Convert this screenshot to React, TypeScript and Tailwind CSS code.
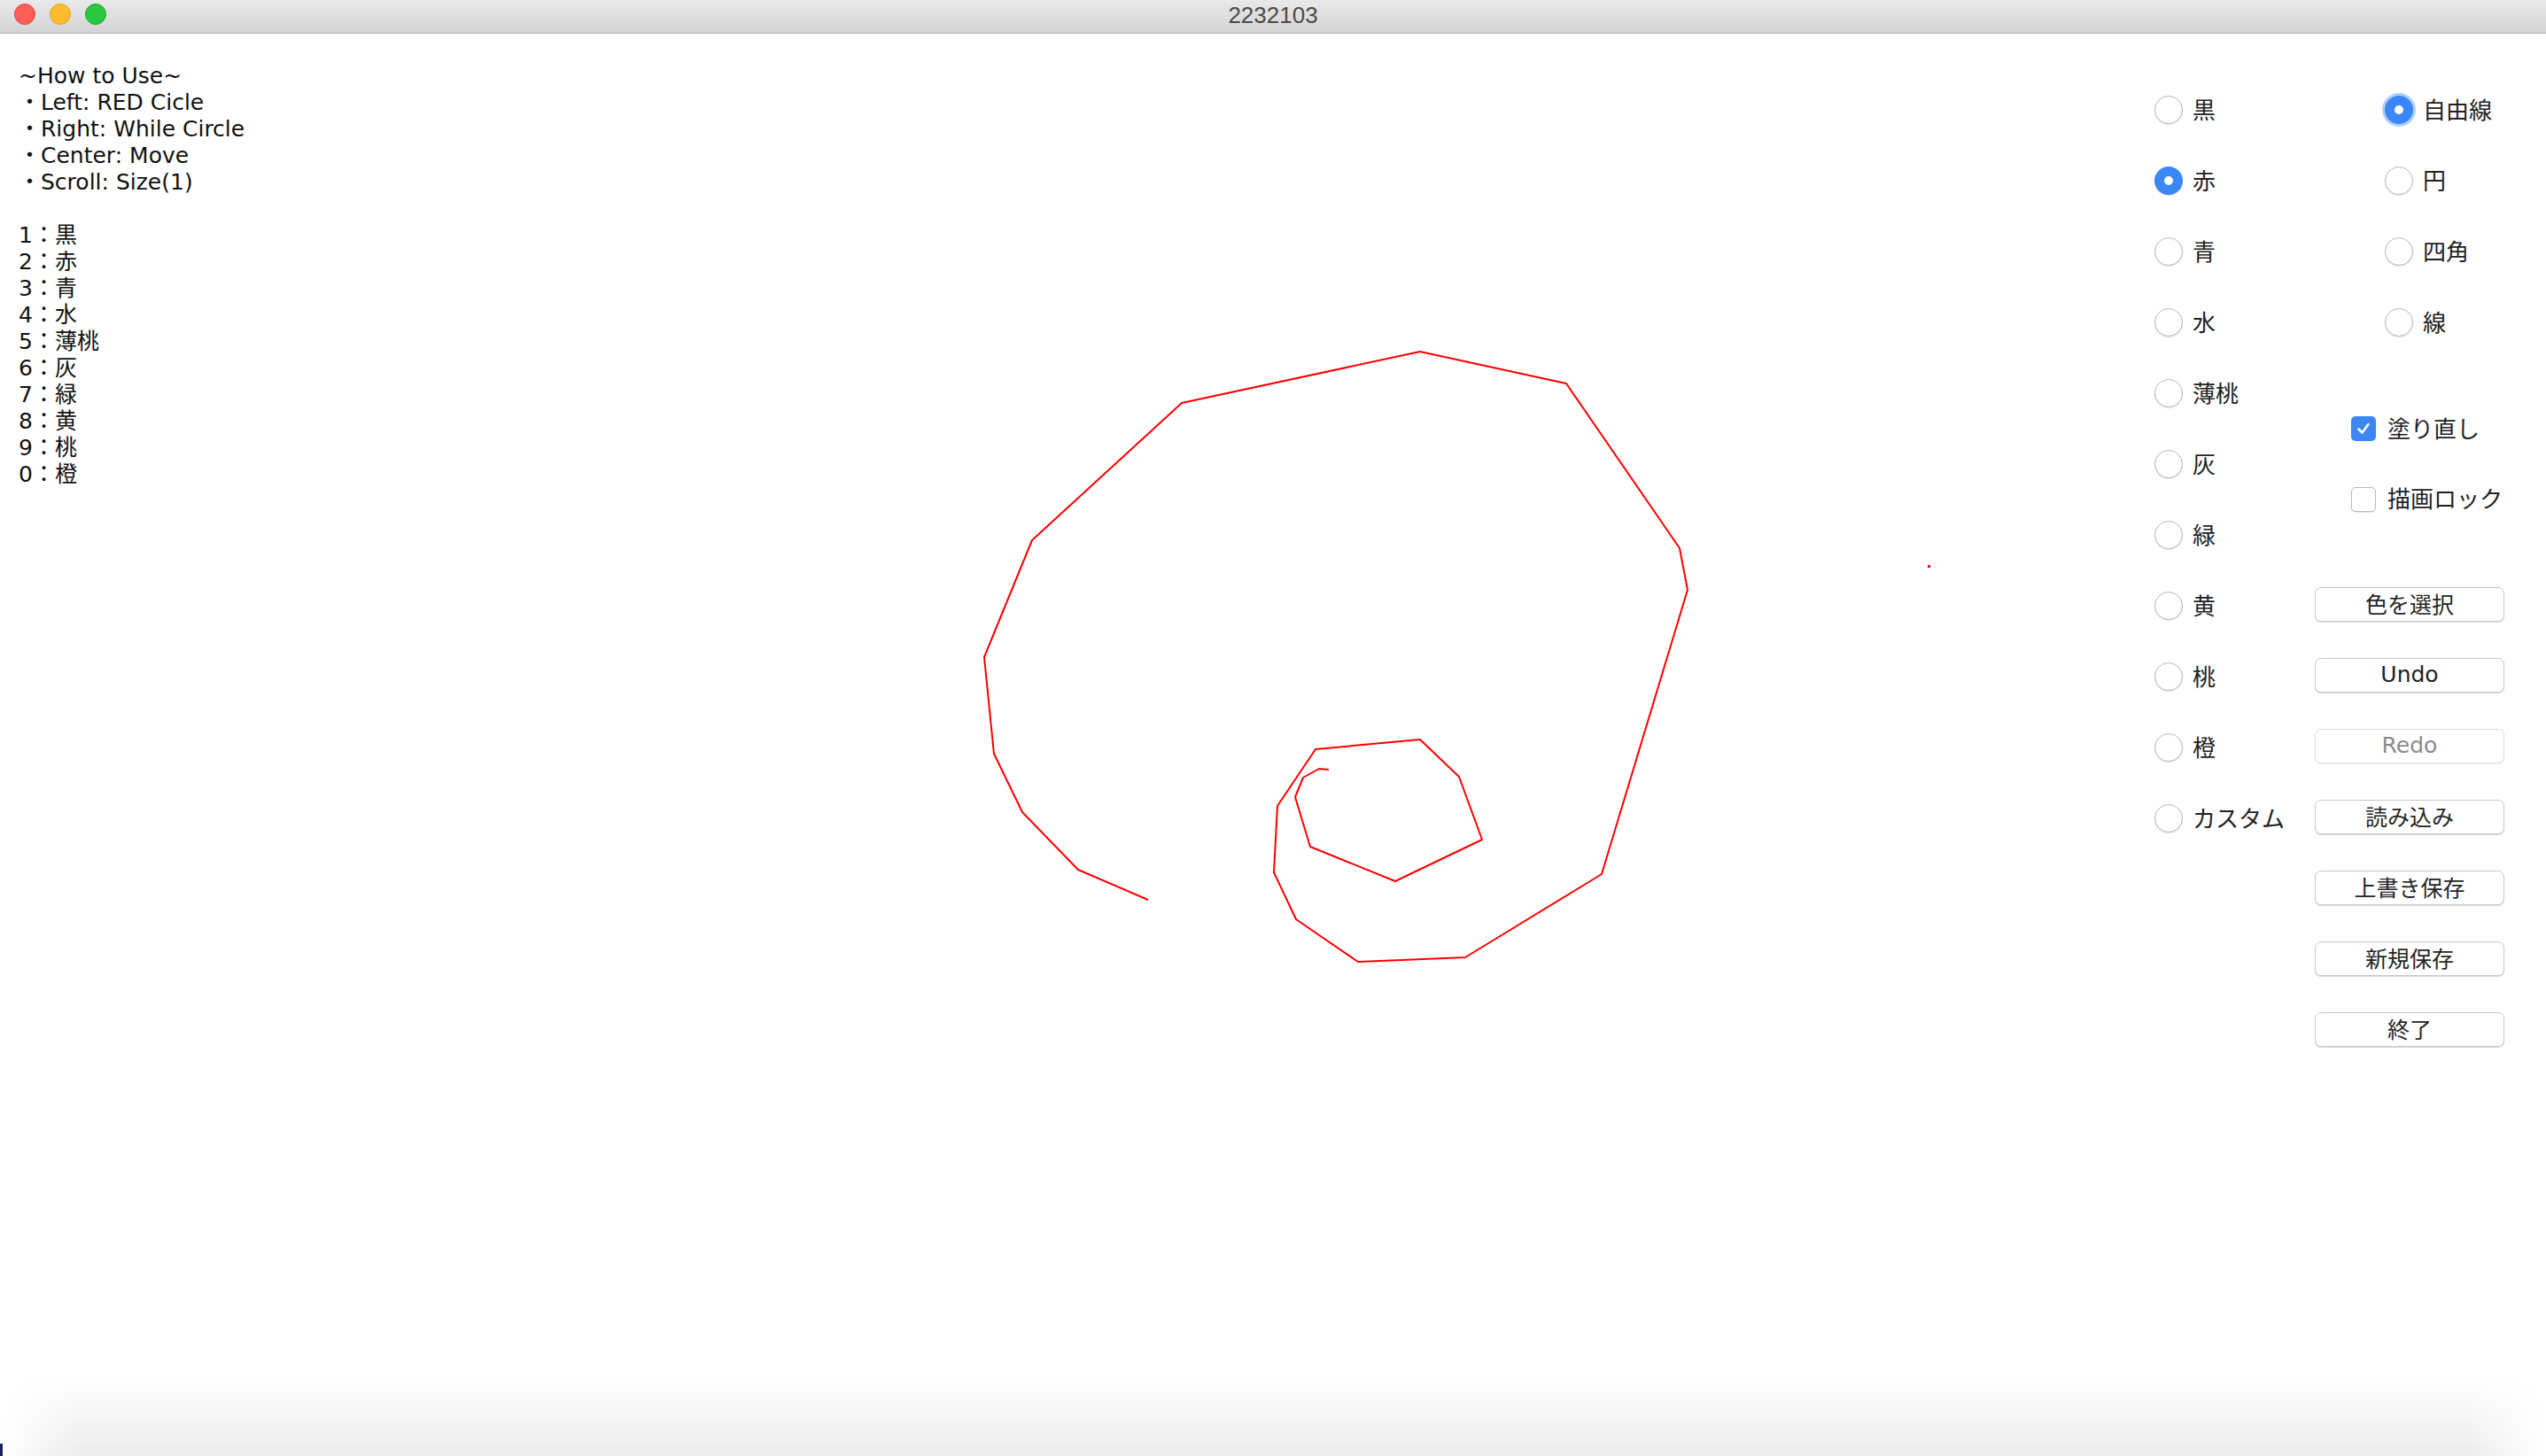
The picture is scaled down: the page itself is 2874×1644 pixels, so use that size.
import React from "react";

const colors = ["黒", "赤", "青", "水", "薄桃", "灰", "緑", "黄", "桃", "橙", "カスタム"];
const shapes = ["自由線", "円", "四角", "線"];
const buttons = ["色を選択", "Undo", "Redo", "読み込み", "上書き保存", "新規保存", "終了"];
const keys = ["1：黒", "2：赤", "3：青", "4：水", "5：薄桃", "6：灰", "7：緑", "8：黄", "9：桃", "0：橙"];

// the stroke on the canvas, in page pixels
const stroke = [
  [1296, 1016], [1217, 982], [1154, 917], [1122, 851], [1111, 742], [1165, 610],
  [1334, 455], [1603, 397], [1768, 433], [1896, 619], [1905, 666], [1808, 987],
  [1654, 1081], [1533, 1086], [1463, 1038], [1438, 985], [1442, 910], [1485, 846],
  [1603, 835], [1647, 877], [1673, 948], [1575, 995], [1479, 956], [1462, 900],
  [1471, 878], [1489, 868], [1500, 869],
];

function Radio({ checked, focused }: { checked?: boolean; focused?: boolean }) {
  if (checked) {
    return (
      <div
        className={
          "flex h-[32px] w-[32px] shrink-0 items-center justify-center rounded-full bg-[#3b87f6] " +
          (focused ? "shadow-[0_0_0_3px_rgba(110,165,250,0.55)]" : "shadow-[0_1px_1px_rgba(0,0,0,0.15)]")
        }
      >
        <div className="h-[10px] w-[10px] rounded-full bg-white" />
      </div>
    );
  }
  return <div className="h-[32px] w-[32px] shrink-0 rounded-full border border-[#b9b9b9] bg-white shadow-[0_1px_1px_rgba(0,0,0,0.12)]" />;
}

function Check({ checked }: { checked?: boolean }) {
  if (checked) {
    return (
      <div className="flex h-[28px] w-[28px] shrink-0 items-center justify-center rounded-[5px] bg-[#3b87f6]">
        <svg width="18" height="18" viewBox="0 0 18 18">
          <path d="M3.5 9.5 L7.5 13.5 L14.5 4" fill="none" stroke="white" strokeWidth="2.6" strokeLinecap="round" strokeLinejoin="round" />
        </svg>
      </div>
    );
  }
  return <div className="h-[28px] w-[28px] shrink-0 rounded-[5px] border border-[#b9b9b9] bg-white shadow-[0_1px_1px_rgba(0,0,0,0.1)]" />;
}

export default function App() {
  return (
    <div className="relative flex h-[1644px] w-[2874px] flex-col overflow-hidden bg-white">
      <div className="relative flex h-[38px] shrink-0 items-center justify-center border-b border-[#b3b3b3] bg-linear-to-b from-[#e9e9e9] to-[#d4d4d4]">
        <div className="absolute left-[16px] top-[4px] flex gap-[16px]">
          <div className="h-[24px] w-[24px] rounded-full border border-[#e1443d] bg-[#fe5f57]" />
          <div className="h-[24px] w-[24px] rounded-full border border-[#dea224] bg-[#febc2e]" />
          <div className="h-[24px] w-[24px] rounded-full border border-[#1aab2a] bg-[#28c840]" />
        </div>
        <span className="pb-[3px] font-['Liberation_Sans',sans-serif] text-[26px] leading-none text-[#4b4b4b]">2232103</span>
      </div>

      <div className="flex flex-1 justify-between">
        <div className="pl-[21px] pt-[33px] font-['DejaVu_Sans','Noto_Sans_CJK_JP',sans-serif] text-[25px] leading-[30px] text-[#111]">
          <div>~How to Use~</div>
          <div>・Left: RED Cicle</div>
          <div>・Right: While Circle</div>
          <div>・Center: Move</div>
          <div>・Scroll: Size(1)</div>
          <div className="h-[30px]" />
          {keys.map((k) => (
            <div key={k}>{k}</div>
          ))}
        </div>

        <div className="flex pr-[47px] pt-[46px] font-['Noto_Sans_CJK_JP',sans-serif] text-[26px] text-[#222]">
          <div className="flex w-[181px] flex-col">
            {colors.map((c) => (
              <div key={c} className="flex h-[80px] items-center gap-[11px]">
                <Radio checked={c === "赤"} />
                <span className="-mt-[3px] leading-none">{c}</span>
              </div>
            ))}
          </div>

          <div className="flex w-[214px] flex-col">
            {shapes.map((s) => (
              <div key={s} className="flex h-[80px] items-center gap-[11px] pl-[79px]">
                <Radio checked={s === "自由線"} focused={s === "自由線"} />
                <span className="-mt-[3px] leading-none">{s}</span>
              </div>
            ))}
            <div className="h-[40px]" />
            <div className="flex h-[80px] items-center gap-[13px] pl-[41px]">
              <Check checked />
              <span className="-mt-[3px] leading-none">塗り直し</span>
            </div>
            <div className="flex h-[79px] items-center gap-[13px] pl-[41px]">
              <Check />
              <span className="-mt-[3px] leading-none">描画ロック</span>
            </div>
            <div className="h-[39px]" />
            {buttons.map((b) => (
              <div key={b} className="flex h-[80px] items-center">
                <button
                  className={
                    "flex h-[39px] w-full items-center justify-center rounded-[7px] border bg-white " +
                    (b === "Redo"
                      ? "border-[#dcdcdc] font-['DejaVu_Sans',sans-serif] text-[25px] font-medium text-[#8b8b8b] shadow-[0_1px_1px_rgba(0,0,0,0.06)]"
                      : b === "Undo"
                        ? "border-[#c8c8c8] font-['DejaVu_Sans',sans-serif] text-[25px] font-medium text-[#222] shadow-[0_1px_1px_rgba(0,0,0,0.16)]"
                        : "border-[#c8c8c8] text-[25px] text-[#262626] shadow-[0_1px_1px_rgba(0,0,0,0.16)]")
                  }
                >
                  <span className="-mt-[2px] leading-none">{b}</span>
                </button>
              </div>
            ))}
          </div>
        </div>
      </div>

      <svg className="pointer-events-none absolute inset-0" width="2874" height="1644" viewBox="0 0 2874 1644">
        <polyline points={stroke.map((p) => p.join(",")).join(" ")} fill="none" stroke="#ff0000" strokeWidth="2" strokeLinejoin="round" />
        <rect x="2176" y="638" width="3" height="3" fill="#ff0000" />
      </svg>

      <div className="pointer-events-none absolute inset-x-0 bottom-0 h-[92px] bg-linear-to-b from-white/0 to-[#ececec] [mask-image:linear-gradient(to_right,transparent,black_90px,black_calc(100%-90px),transparent)]" />
      <div className="absolute bottom-0 left-0 h-[14px] w-[3px] bg-[#1c1f5a]" />
    </div>
  );
}
